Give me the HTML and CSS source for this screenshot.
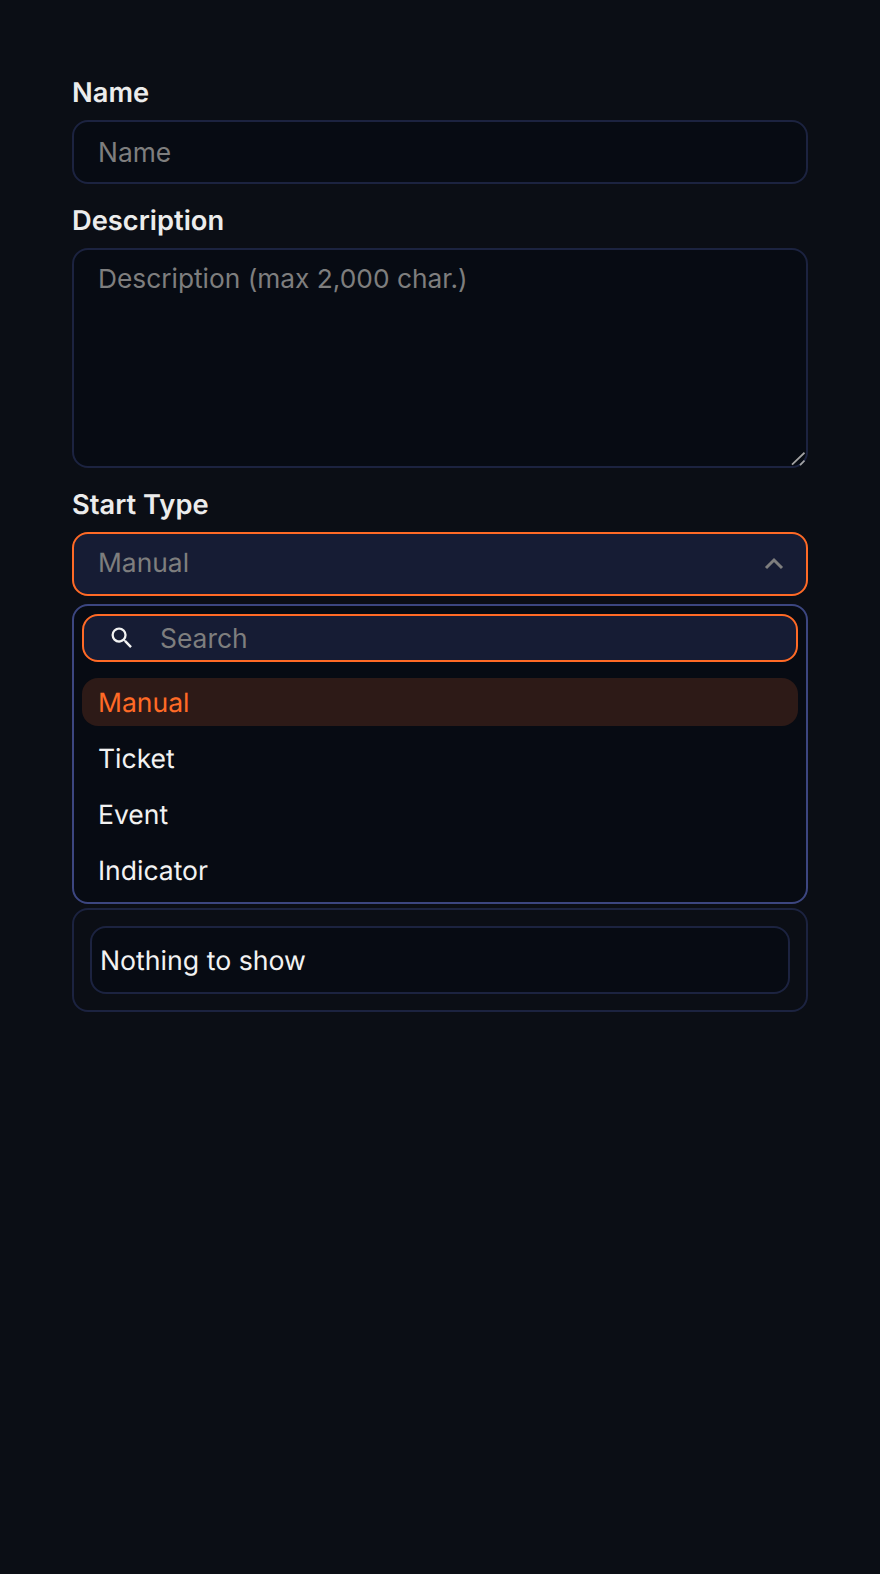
FILE: index.html
```html
<!DOCTYPE html>
<html lang="en">
<head>
    <meta charset="UTF-8">
    <meta name="viewport" content="width=device-width, initial-scale=1.0">
    <title>Start form</title>
    <link rel="stylesheet" href="styles.css">
</head>
<body>
    <form class="form">
        <label class="label" for="name">Name</label>
        <input class="field" id="name" type="text" placeholder="Name">

        <label class="label label_next" for="desc">Description</label>
        <div class="area_wrap">
            <textarea class="field area" id="desc" placeholder="Description (max 2,000 char.)"></textarea>
            <svg class="grip" width="14" height="14" viewBox="0 0 14 14"><path d="M1 12.7L13.5 .7M9 13.2L13.5 8.5" fill="none" stroke="currentColor" stroke-width="1.8"/></svg>
        </div>

        <label class="label label_next">Start Type</label>
        <div class="select">
            <span class="select_value">Manual</span>
            <svg class="chevron" width="24" height="24" viewBox="0 0 24 24"><path d="M4 16l8-8 8 8" fill="none" stroke="currentColor" stroke-width="3"/></svg>
        </div>
        <div class="dropdown">
            <div class="search">
                <svg class="search_icon" width="28" height="28" viewBox="0 0 24 24"><path d="M15.5 14h-.79l-.28-.27A6.47 6.47 0 0 0 16 9.5 6.5 6.5 0 1 0 9.5 16c1.61 0 3.09-.59 4.23-1.57l.27.28v.79l5 4.99L20.49 19l-4.99-5zm-6 0C7.01 14 5 11.99 5 9.5S7.01 5 9.5 5 14 7.01 14 9.5 11.99 14 9.5 14z" fill="currentColor"/></svg>
                <input class="search_input" type="text" placeholder="Search">
            </div>
            <ul class="options">
                <li class="selected">Manual</li>
                <li>Ticket</li>
                <li>Event</li>
                <li>Indicator</li>
            </ul>
        </div>
        <div class="empty">
            <div class="empty_inner">Nothing to show</div>
        </div>
    </form>
</body>
</html>
```

FILE: styles.css
```css
*{
    box-sizing: border-box;
}
body{
    margin: 0;
    min-height: 1574px;
    background: #0b0e15;
    font-family: Inter, "Noto Sans", sans-serif;
    font-size: 26.4px;
    color: #f2f2f2;
    text-rendering: geometricPrecision;
}
.form{
    display: flex;
    flex-direction: column;
    padding: 77px 72px 0;
}
.label{
    font-size: 27.3px;
    font-weight: 600;
    line-height: 32px;
    margin-bottom: 11px;
    color: #ececec;
}
.label_next{
    margin-top: 21px;
}
.field{
    width: 100%;
    height: 64px;
    padding: 0 24px;
    background: #070b13;
    border: 2px solid #1c2340;
    border-radius: 16px;
    font: inherit;
    color: #f2f2f2;
    outline: none;
}
.field::placeholder,
.search_input::placeholder{
    color: #7e7e7e;
    opacity: 1;
}
.area_wrap{
    position: relative;
}
.area{
    display: block;
    height: 220px;
    padding: 13px 24px;
    font-size: 26.3px;
    line-height: 32px;
    resize: none;
}
.grip{
    position: absolute;
    right: 3px;
    bottom: 2px;
    color: #a3a3a3;
    pointer-events: none;
}
.select{
    display: flex;
    align-items: center;
    justify-content: space-between;
    height: 64px;
    padding: 0 20px 0 24px;
    background: #161c34;
    border: 2px solid #ff6a26;
    border-radius: 16px;
    color: #7e7e7e;
}
.select_value{
    margin-bottom: 3px;
}
.chevron{
    color: #7e7e7e;
}
.dropdown{
    margin-top: 8px;
    height: 300px;
    padding: 8px;
    background: #070b13;
    border: 2px solid #3c4680;
    border-radius: 16px;
}
.search{
    display: flex;
    align-items: center;
    height: 48px;
    padding-left: 24px;
    background: #161c34;
    border: 2px solid #ff6a26;
    border-radius: 16px;
}
.search_icon{
    flex: none;
    color: #f2f2f2;
}
.search_input{
    flex: 1;
    min-width: 0;
    margin-left: 24px;
    padding: 0;
    background: none;
    border: none;
    outline: none;
    font: inherit;
    color: #f2f2f2;
}
.options{
    list-style: none;
    margin: 16px 0 0;
    padding: 0;
    font-size: 26.5px;
}
.options li{
    height: 48px;
    margin-bottom: 8px;
    padding: 0 16px;
    line-height: 50px;
    border-radius: 16px;
}
.options .selected{
    background: #2d1a17;
    color: #ff6a26;
}
.empty{
    margin-top: 4px;
    padding: 16px;
    border: 2px solid #1c2340;
    border-radius: 16px;
}
.empty_inner{
    height: 68px;
    padding: 0 8px;
    font-size: 26.7px;
    line-height: 66px;
    background: #070b13;
    border: 2px solid #1c2340;
    border-radius: 16px;
}
```
